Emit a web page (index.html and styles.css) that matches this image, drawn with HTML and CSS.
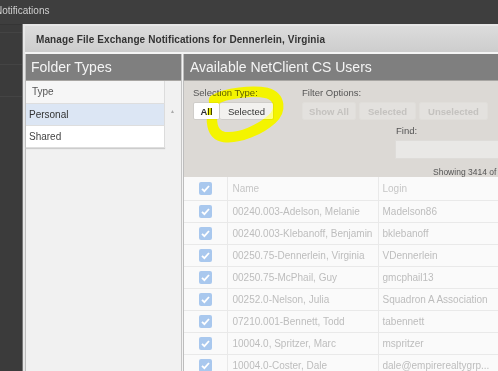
FILE: index.html
```html
<!DOCTYPE html>
<html lang="en">
<head>
  <meta charset="UTF-8">
  <title>Notifications</title>
  <link rel="stylesheet" href="styles.css">
</head>
<body>
  <div class="topbar">Notifications</div>
  <div class="backdrop">
    <div class="bg-row"></div>
    <div class="bg-row"></div>
    <div class="bg-row"></div>
  </div>

  <div class="dialog">
    <div class="dialog-title">Manage File Exchange Notifications for Dennerlein, Virginia</div>
    <div class="panels">
      <div class="panel folders">
        <div class="panel-head">Folder Types</div>
        <div class="folders-body">
          <table class="type-table">
            <tr class="th"><td>Type</td></tr>
            <tr class="sel"><td>Personal</td></tr>
            <tr><td>Shared</td></tr>
          </table>
          <div class="scroll"><span class="arrow">&#9650;</span></div>
        </div>
      </div>

      <div class="panel users">
        <div class="panel-head">Available NetClient CS Users</div>
        <div class="toolbar">
          <div class="tool-row">
            <div class="group">
              <div class="label">Selection Type:</div>
              <div class="btns">
                <button class="btn active">All</button>
                <button class="btn plain">Selected</button>
              </div>
            </div>
            <div class="group filter">
              <div class="label">Filter Options:</div>
              <div class="btns spaced">
                <button class="btn off">Show All</button>
                <button class="btn off">Selected</button>
                <button class="btn off">Unselected</button>
              </div>
            </div>
          </div>
          <div class="find">
            <div class="label">Find:</div>
            <div class="find-input"></div>
          </div>
          <div class="showing">Showing 3414 of 3414</div>
        </div>

        <table class="user-table">
          <tr class="th">
            <td class="cb"><svg width="13" height="13" viewBox="0 0 13 13"><rect width="13" height="13" rx="2" fill="#a9c8ee"/><path d="M3 6.8 L5.4 9.2 L10 4" fill="none" stroke="#fff" stroke-width="1.8"/></svg></td>
            <td class="name">Name</td>
            <td class="login">Login</td>
          </tr>
          <tr>
            <td class="cb"><svg width="13" height="13" viewBox="0 0 13 13"><rect width="13" height="13" rx="2" fill="#a9c8ee"/><path d="M3 6.8 L5.4 9.2 L10 4" fill="none" stroke="#fff" stroke-width="1.8"/></svg></td>
            <td class="name">00240.003-Adelson, Melanie</td>
            <td class="login">Madelson86</td>
          </tr>
          <tr>
            <td class="cb"><svg width="13" height="13" viewBox="0 0 13 13"><rect width="13" height="13" rx="2" fill="#a9c8ee"/><path d="M3 6.8 L5.4 9.2 L10 4" fill="none" stroke="#fff" stroke-width="1.8"/></svg></td>
            <td class="name">00240.003-Klebanoff, Benjamin</td>
            <td class="login">bklebanoff</td>
          </tr>
          <tr>
            <td class="cb"><svg width="13" height="13" viewBox="0 0 13 13"><rect width="13" height="13" rx="2" fill="#a9c8ee"/><path d="M3 6.8 L5.4 9.2 L10 4" fill="none" stroke="#fff" stroke-width="1.8"/></svg></td>
            <td class="name">00250.75-Dennerlein, Virginia</td>
            <td class="login">VDennerlein</td>
          </tr>
          <tr>
            <td class="cb"><svg width="13" height="13" viewBox="0 0 13 13"><rect width="13" height="13" rx="2" fill="#a9c8ee"/><path d="M3 6.8 L5.4 9.2 L10 4" fill="none" stroke="#fff" stroke-width="1.8"/></svg></td>
            <td class="name">00250.75-McPhail, Guy</td>
            <td class="login">gmcphail13</td>
          </tr>
          <tr>
            <td class="cb"><svg width="13" height="13" viewBox="0 0 13 13"><rect width="13" height="13" rx="2" fill="#a9c8ee"/><path d="M3 6.8 L5.4 9.2 L10 4" fill="none" stroke="#fff" stroke-width="1.8"/></svg></td>
            <td class="name">00252.0-Nelson, Julia</td>
            <td class="login">Squadron A Association</td>
          </tr>
          <tr>
            <td class="cb"><svg width="13" height="13" viewBox="0 0 13 13"><rect width="13" height="13" rx="2" fill="#a9c8ee"/><path d="M3 6.8 L5.4 9.2 L10 4" fill="none" stroke="#fff" stroke-width="1.8"/></svg></td>
            <td class="name">07210.001-Bennett, Todd</td>
            <td class="login">tabennett</td>
          </tr>
          <tr>
            <td class="cb"><svg width="13" height="13" viewBox="0 0 13 13"><rect width="13" height="13" rx="2" fill="#a9c8ee"/><path d="M3 6.8 L5.4 9.2 L10 4" fill="none" stroke="#fff" stroke-width="1.8"/></svg></td>
            <td class="name">10004.0, Spritzer, Marc</td>
            <td class="login">mspritzer</td>
          </tr>
          <tr>
            <td class="cb"><svg width="13" height="13" viewBox="0 0 13 13"><rect width="13" height="13" rx="2" fill="#a9c8ee"/><path d="M3 6.8 L5.4 9.2 L10 4" fill="none" stroke="#fff" stroke-width="1.8"/></svg></td>
            <td class="name">10004.0-Coster, Dale</td>
            <td class="login">dale@empirerealtygrp...</td>
          </tr>
        </table>
      </div>
    </div>
  </div>

  <!-- highlighter scribble drawn over the screenshot -->
  <svg class="scribble" width="498" height="371" viewBox="0 0 498 371">
    <path d="M214 100 C226 93, 252 90, 267 93 C281 97, 281 111, 272 119 C261 129, 240 139, 224 137 C211 135, 210 120, 214 104" fill="none" stroke="#ffff00" stroke-width="10.5" stroke-linecap="round"/>
  </svg>
</body>
</html>
```

FILE: styles.css
```css
* {
  box-sizing: border-box;
}
body {
  margin: 0;
  width: 498px;
  height: 371px;
  overflow: hidden;
  position: relative;
  background: #3b3b3b;
  font-family: "Liberation Sans", Arial, sans-serif;
}
.topbar {
  height: 25px;
  line-height: 21px;
  margin-left: -5px;
  font-size: 10px;
  color: #cfcfcf;
  background: #3e3e3e;
  border-bottom: 1px solid #353535;
}
.bg-row {
  height: 32px;
  border-bottom: 1px solid #444;
}
.bg-row:first-child {
  height: 8px;
}

.dialog {
  position: absolute;
  left: 23px;
  top: 24px;
  width: 560px;
  height: 400px;
  background: #f4f4f4;
  border: 2px solid #e6e6e6;
  box-shadow: -1px 0 0 #777;
}
.dialog-title {
  height: 26px;
  line-height: 27px;
  padding-left: 11px;
  font-size: 10px;
  font-weight: bold;
  letter-spacing: 0.1px;
  color: #333;
  background: linear-gradient(#dcdcdc, #cdcdcd);
}
.panels {
  display: flex;
  gap: 1px;
  margin-top: 2px;
  height: 100%;
}
.panel-head {
  height: 27px;
  line-height: 26px;
  padding-left: 6px;
  font-size: 14px;
  color: #f4f4f4;
  background: #7f7f7f;
  border-bottom: 1px solid #a8a6a3;
}

.folders {
  width: 157px;
  flex: none;
  background: #f1f1f1;
  border-right: 1px solid #c4c4c4;
  border-left: 1px solid #bdbdbd;
}
.folders .panel-head {
  padding-left: 5px;
}
.folders-body {
  display: flex;
}
.type-table {
  width: 139px;
  border-collapse: collapse;
  background: #fff;
  box-shadow: 0 1px 1px #ccc;
  border-right: 1px solid #dcdcdc;
}
.type-table td {
  height: 22px;
  padding: 0 3px;
  font-size: 10px;
  color: #444;
  border-bottom: 1px solid #dedede;
}
.type-table .th td {
  padding-left: 6px;
  color: #555;
  background: #f6f6f6;
}
.type-table .sel td {
  background: #dce6f4;
  color: #333;
}
.scroll {
  flex: 1;
  position: relative;
  height: 66px;
  background: #f1f1f1;
}
.arrow {
  position: absolute;
  left: 5px;
  top: 27px;
  font-size: 5px;
  color: #aaa;
}

.users {
  flex: 1;
  background: #f6f6f6;
  border-left: 1px solid #bdbdbd;
}
.toolbar {
  height: 96px;
  padding: 6px 0 0 9px;
  background: #dcd9d5;
}
.tool-row {
  display: flex;
}
.label {
  font-size: 9.5px;
  line-height: 12px;
  color: #555;
}
.btns {
  display: flex;
  margin-top: 3px;
}
.btns.spaced {
  gap: 3px;
}
.btn {
  height: 18px;
  padding: 0 8px;
  font-family: inherit;
  font-size: 9.5px;
  font-weight: bold;
  border: 1px solid #cfcdca;
  border-radius: 2px;
  background: #e7e5e2;
  color: #444;
}
.btn.active {
  width: 27px;
  padding: 0;
  background: #fff;
  color: #333;
}
.btn.plain {
  width: 54px;
  padding: 0;
  font-weight: normal;
  background: #f2f1ef;
  border-left: none;
  color: #333;
}
.btn.off {
  color: #c4c2bf;
  background: #e3e1de;
  border-color: #e0deda;
}
.btn.off:first-child {
  width: 54px;
  padding: 0;
}
.filter {
  margin-left: 28px;
}
.find {
  margin: 5px 0 0 202px;
}
.find .label {
  padding-left: 1px;
}
.find-input {
  height: 19px;
  margin-top: 3px;
  background: #e9e8e6;
  border: 1px solid #dedcd9;
}
.showing {
  margin: 8px 0 0 240px;
  font-size: 8.5px;
  white-space: nowrap;
  color: #555;
}

.user-table {
  border-collapse: collapse;
  background: #fafafa;
}
.user-table td {
  height: 22px;
  padding: 0;
  font-size: 10px;
  color: #bdbdbd;
  white-space: nowrap;
  border-bottom: 1px solid #e9e9e9;
  border-right: 1px solid #e9e9e9;
}
.user-table .th td {
  height: 23px;
  color: #c6c6c6;
}
.user-table .cb {
  width: 43px;
  text-align: center;
}
.user-table .cb svg {
  display: block;
  margin: 0 auto;
}
.user-table .name {
  width: 151px;
  padding-left: 5px;
}
.user-table .login {
  width: 200px;
  padding-left: 4px;
}

.scribble {
  position: absolute;
  left: 0;
  top: 0;
  pointer-events: none;
  mix-blend-mode: color;
}
```
